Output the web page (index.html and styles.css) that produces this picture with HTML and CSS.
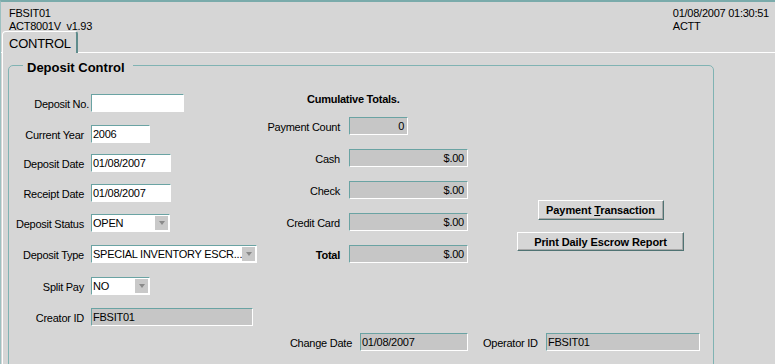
FILE: index.html
```html
<!DOCTYPE html>
<html lang="en">
<head>
    <meta charset="UTF-8">
    <title>FBSIT01 - Deposit Control</title>
    <link rel="stylesheet" href="styles.css">
</head>
<body>
    <div class="window">
        <div class="header">
            <div>
                <div>FBSIT01</div>
                <div>ACT8001V&nbsp; v1.93</div>
            </div>
            <div>
                <div>01/08/2007 01:30:51</div>
                <div>ACTT</div>
            </div>
        </div>
        <div class="tabs">
            <div class="tab">CONTROL</div>
        </div>
        <div class="panel">
            <fieldset class="frame">
                <legend>Deposit Control</legend>
                <div class="frame-body">
                    <!-- left column: deposit fields -->
                    <div class="left">
                        <div class="label label-near">Deposit No.</div>
                        <div class="field w-deposit"></div>

                        <div class="label">Current Year</div>
                        <div class="field w-year">2006</div>

                        <div class="label">Deposit Date</div>
                        <div class="field w-date">01/08/2007</div>

                        <div class="label">Receipt Date</div>
                        <div class="field w-date">01/08/2007</div>

                        <div class="label">Deposit Status</div>
                        <div class="combo w-status"><span class="value">OPEN</span><span class="arrow"></span></div>

                        <div class="label">Deposit Type</div>
                        <div class="combo w-type"><span class="value">SPECIAL INVENTORY ESCR...</span><span class="arrow"></span></div>

                        <div class="label">Split Pay</div>
                        <div class="combo w-year"><span class="value">NO</span><span class="arrow"></span></div>

                        <div class="label">Creator ID</div>
                        <div class="field ro w-creator">FBSIT01</div>
                    </div>

                    <!-- middle column: totals -->
                    <div class="mid">
                        <div class="title">Cumulative Totals.</div>

                        <div class="label">Payment Count</div>
                        <div class="field ro num w-count">0</div>

                        <div class="label">Cash</div>
                        <div class="field ro num w-amount">$.00</div>

                        <div class="label">Check</div>
                        <div class="field ro num w-amount">$.00</div>

                        <div class="label">Credit Card</div>
                        <div class="field ro num w-amount">$.00</div>

                        <div class="label bold">Total</div>
                        <div class="field ro num w-amount">$.00</div>
                    </div>

                    <!-- right column: actions -->
                    <div class="actions">
                        <button class="button pay">Payment <u>T</u>ransaction</button>
                        <button class="button print">Print Daily Escrow Report</button>
                    </div>

                    <div class="bottom">
                        <div class="label change">Change Date</div>
                        <div class="field ro w-change">01/08/2007</div>
                        <div class="label operator">Operator ID</div>
                        <div class="field ro w-operator">FBSIT01</div>
                    </div>
                </div>
            </fieldset>
        </div>
    </div>
</body>
</html>
```

FILE: styles.css
```css
* {
    box-sizing: border-box;
}
body {
    margin: 0;
    background-color: #d6d6d6;
    font-family: "Liberation Sans", Arial, sans-serif;
    font-size: 11px;
    letter-spacing: -0.25px;
    color: #000;
}
.window {
    height: 364px;
    border-top: 2px solid #7aabab;
    border-left: 1px solid #9cc0c0;
    overflow: hidden;
}
.header {
    display: flex;
    justify-content: space-between;
    height: 29px;
    padding: 5px 6px 0 8px;
    line-height: 13px;
}
.tabs {
    display: flex;
    height: 22px;
    padding-left: 1px;
    border-bottom: 1px solid #fff;
}
.tab {
    width: 76px;
    height: 22px;
    margin-bottom: -1px;
    padding: 3px 0 0 6px;
    background-color: #d6d6d6;
    border-top: 1px solid #fff;
    border-left: 1px solid #fff;
    border-right: 2px solid #5f8c8c;
    border-radius: 4px 3px 0 0;
    font-size: 13px;
    line-height: 17px;
}
.panel {
    height: 320px;
    margin-left: 1px;
    padding: 2px 0 0 5px;
    border-left: 1px solid #fff;
}
.frame {
    width: 706px;
    height: 330px;
    min-width: 0;
    margin: 0;
    padding: 0;
    border: 1px solid #80b3b3;
    border-radius: 5px 5px 0 0;
}
.frame legend {
    margin-left: 14px;
    padding: 5px 8px 0 4px;
    font-size: 13px;
    font-weight: bold;
    line-height: 15px;
    letter-spacing: 0;
}
.frame-body {
    display: grid;
    grid-template-columns: 252px 220px 1fr;
}

/* labels and fields */
.label {
    text-align: right;
    padding: 3px 7px 0 0;
    line-height: 15px;
    white-space: nowrap;
}
.label.bold {
    font-weight: bold;
}
.field {
    height: 18px;
    padding: 1px 3px 0 1px;
    background-color: #fff;
    border: 1px solid;
    border-color: #6aa3a3 #fff #fff #6aa3a3;
    line-height: 14px;
    white-space: nowrap;
    overflow: hidden;
}
.field.ro {
    background-color: #c6c6c6;
}
.field.num {
    text-align: right;
}
.combo {
    display: flex;
    height: 18px;
    background-color: #fff;
    border: 1px solid;
    border-color: #6aa3a3 #fff #fff #6aa3a3;
}
.combo .value {
    flex: 1;
    padding: 1px 0 0 1px;
    line-height: 14px;
    white-space: nowrap;
    overflow: hidden;
}
.combo .arrow {
    width: 13px;
    margin: 1px 1px 1px 0;
    background-color: #c9c9c9;
    display: flex;
    align-items: center;
    justify-content: center;
}
.combo .arrow::after {
    content: "";
    border-left: 3px solid transparent;
    border-right: 3px solid transparent;
    border-top: 4px solid #8a8a8a;
}

/* widths */
.w-deposit { width: 93px; }
.w-year { width: 59px; }
.w-date { width: 80px; }
.w-status { width: 79px; }
.w-type { width: 166px; }
.w-creator { width: 162px; }
.w-count { width: 59px; }
.w-amount { width: 119px; }
.w-change { width: 108px; }
.w-operator { width: 154px; }

.left {
    display: grid;
    grid-template-columns: 82px auto;
    grid-template-rows: 31px 29px 30px 30px 31px 32px 31px 18px;
    align-items: start;
    padding-top: 19px;
}
.left .label-near {
    padding-right: 2px;
}
.mid {
    display: grid;
    grid-template-columns: 88px auto;
    align-content: start;
    align-items: start;
    row-gap: 14px;
    padding-top: 17px;
}
.mid .label {
    padding-right: 9px;
}
.mid .title {
    grid-column: 1 / 3;
    margin-bottom: -3px;
    padding-left: 46px;
    font-weight: bold;
    line-height: 14px;
}
.actions {
    display: flex;
    flex-direction: column;
    align-items: center;
    gap: 12px;
    padding: 125px 0 0 7px;
}
.button {
    height: 20px;
    padding: 0;
    background-color: #d6d6d6;
    border: 1px solid;
    border-color: #fff #4f7373 #4f7373 #fff;
    box-shadow: inset -1px -1px 0 #a8a8a8;
    font-family: inherit;
    font-size: 11px;
    font-weight: bold;
    letter-spacing: -0.1px;
    color: #000;
}
.button.pay {
    width: 126px;
}
.button.print {
    width: 167px;
    height: 19px;
}
.bottom {
    grid-column: 2 / 4;
    display: flex;
    align-items: start;
    margin-top: 7px;
}
.bottom .label.change {
    width: 99px;
    padding-right: 8px;
}
.bottom .label.operator {
    width: 63px;
    margin-left: 15px;
    padding-right: 9px;
}
```
